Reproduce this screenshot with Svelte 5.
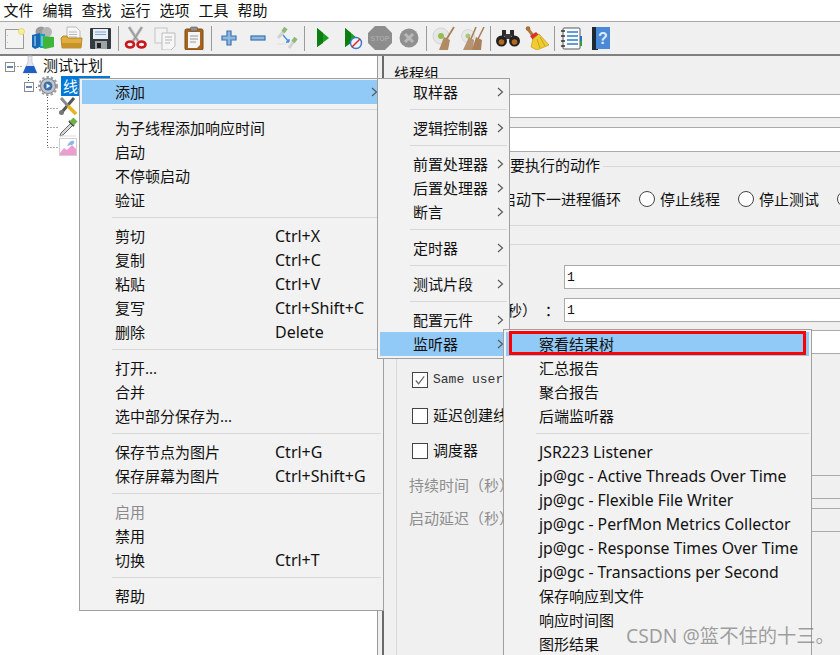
<script>
  const menus = ['文件','编辑','查找','运行','选项','工具','帮助'];
  const m1 = [
    {t:'添加',arrow:true,on:true},{sep:true},
    {t:'为子线程添加响应时间'},{t:'启动'},{t:'不停顿启动'},{t:'验证'},{sep:true},
    {t:'剪切',k:'Ctrl+X'},{t:'复制',k:'Ctrl+C'},{t:'粘贴',k:'Ctrl+V'},{t:'复写',k:'Ctrl+Shift+C'},{t:'删除',k:'Delete'},{sep:true},
    {t:'打开...'},{t:'合并'},{t:'选中部分保存为...'},{sep:true},
    {t:'保存节点为图片',k:'Ctrl+G'},{t:'保存屏幕为图片',k:'Ctrl+Shift+G'},{sep:true},
    {t:'启用',off:true},{t:'禁用'},{t:'切换',k:'Ctrl+T'},{sep:true},{t:'帮助'}
  ];
  const m2 = [
    {t:'取样器',arrow:true},{sep:true},{t:'逻辑控制器',arrow:true},{sep:true},
    {t:'前置处理器',arrow:true},{t:'后置处理器',arrow:true},{t:'断言',arrow:true},{sep:true},
    {t:'定时器',arrow:true},{sep:true},{t:'测试片段',arrow:true},{sep:true},
    {t:'配置元件',arrow:true},{t:'监听器',arrow:true,on:true}
  ];
  const m3 = [
    {t:'察看结果树',on:true},{t:'汇总报告'},{t:'聚合报告'},{t:'后端监听器'},{sep:true},
    {t:'JSR223 Listener'},{t:'jp@gc - Active Threads Over Time'},{t:'jp@gc - Flexible File Writer'},
    {t:'jp@gc - PerfMon Metrics Collector'},{t:'jp@gc - Response Times Over Time'},{t:'jp@gc - Transactions per Second'},
    {t:'保存响应到文件'},{t:'响应时间图'},{t:'图形结果'}
  ];
  const isLatin = (s) => /^[\x00-\x7f]+$/.test(s);
</script>

{#snippet menuRows(items)}
  {#each items as it}
    {#if it.sep}
      <div class="sep"></div>
    {:else}
      <div class="item" class:on={it.on} class:off={it.off}>
        <span class="lbl" class:latin={isLatin(it.t)}>{it.t}</span>
        {#if it.k}<span class="key">{it.k}</span>{/if}
        {#if it.arrow}
          <svg class="chev" width="7" height="10" viewBox="0 0 7 10"><path d="M1 1l4.500 4L1 9" fill="none" stroke="#555" stroke-width="1.100"/></svg>
        {/if}
      </div>
    {/if}
  {/each}
{/snippet}

{#snippet btn(kind)}
  <div class="tb">
    <svg width="24" height="24" viewBox="0 0 24 24">
      {#if kind==='new'}
        <rect x="3.500" y="3.500" width="18" height="19" fill="#f3f3f1" stroke="#9a9a9a"/>
        <circle cx="19.500" cy="5.500" r="3" fill="#f6ef9a" stroke="#ead96a"/>
        <path d="M5.500 9v1M5.500 16v1" stroke="#bbb"/>
      {:else if kind==='tpl'}
        <circle cx="10" cy="6" r="5.500" fill="#9a9a9a"/><circle cx="16" cy="6" r="5" fill="#b5b5b5"/>
        <path d="M1 9l8-2v14l-5 2-3-2z" fill="#1668b5"/>
        <path d="M9 8h5v14H9z" fill="#15a0c8"/>
        <path d="M12 10l11 1v10l-9 2-2-1z" fill="#3fb53a"/>
        <path d="M4 10v10M11 10v10" stroke="#bfe3f5"/>
      {:else if kind==='open'}
        <path d="M7 1h9l4 4v9H7z" fill="#f7f7f7" stroke="#a9a9a9" stroke-width=".8"/>
        <path d="M9 6h8M9 8.500h8M9 11h8" stroke="#b9b9b9"/>
        <path d="M1 12l2-2h4l1 2h14l-1 10H2z" fill="#e0ae3e" stroke="#a87a1e" stroke-width=".8"/>
        <path d="M2 17h20l-1 5H2z" fill="#c8922a"/>
      {:else if kind==='save'}
        <rect x="1" y="2" width="21" height="21" rx="1" fill="#333b42"/>
        <rect x="4" y="3" width="15" height="10" fill="#e9eef5"/>
        <path d="M6 6h11M6 8.500h11" stroke="#7ea6d2"/>
        <rect x="6" y="15" width="12" height="8" fill="#9fa3a6"/><rect x="8" y="17" width="4" height="5" fill="#222"/>
      {:else if kind==='cut'}
        <path d="M5 1l9 14M18 1L9 15" stroke="#b5b5b5" stroke-width="3" fill="none"/>
        <path d="M5 1l9 14M18 1L9 15" stroke="#8a8a8a" stroke-width=".8" fill="none"/>
        <ellipse cx="6" cy="18.500" rx="4" ry="3" fill="none" stroke="#c8161a" stroke-width="2.600"/>
        <ellipse cx="17.500" cy="18.500" rx="4" ry="3" fill="none" stroke="#c8161a" stroke-width="2.600"/>
      {:else if kind==='copy'}
        <rect x="2" y="2" width="12" height="15" fill="#f3f3f3" stroke="#c4c4c4"/>
        <path d="M9 7h13v13l-4 4H9z" fill="#f6f6f6" stroke="#bcbcbc"/>
        <path d="M12 11h7M12 14h7M12 17h5" stroke="#b4b4b4"/>
      {:else if kind==='paste'}
        <rect x="3" y="3" width="18" height="21" rx="1.500" fill="#a8641e" stroke="#7d4a14"/>
        <path d="M6 6h12v13l-3 3H6z" fill="#f5f5f5"/>
        <rect x="8.500" y="1" width="7" height="4" rx="1" fill="#8f8f8f" stroke="#555" stroke-width=".6"/>
        <path d="M8 10h8M8 13h8M8 16h6" stroke="#999"/>
      {:else if kind==='plus'}
        <path d="M10 5h4v5h5v4h-5v5h-4v-5H5v-4h5z" fill="#8eb8e2" stroke="#3b73ad" stroke-width="1.200"/>
      {:else if kind==='minus'}
        <rect x="5" y="10" width="14" height="4" fill="#8eb8e2" stroke="#3b73ad" stroke-width="1.200"/>
      {:else if kind==='toggle'}
        <path d="M3 12l6-7" stroke="#d2d2d2" stroke-width="3"/><path d="M8 6l3-4" stroke="#8fb87a" stroke-width="4"/>
        <path d="M14 22l5-7" stroke="#d2d2d2" stroke-width="3"/><path d="M18 16l3-4" stroke="#8fb87a" stroke-width="4"/>
        <path d="M8 9l6 7M14 16v-3M14 16h-3" stroke="#3b8fe0" stroke-width="1.300" fill="none"/>
        <path d="M2 18h10" stroke="#ddd"/>
      {:else if kind==='play'}
        <path d="M7 2l12 10L7 21z" fill="#16a21a"/><path d="M7 2l6 5v10l-6 4z" fill="#0d7f12"/>
      {:else if kind==='playno'}
        <path d="M6 2l12 10L6 21z" fill="#16a21a"/><path d="M6 2l6 5v10l-6 4z" fill="#0d7f12"/>
        <circle cx="17" cy="17" r="5.500" fill="#eef3fa" stroke="#3a78c8" stroke-width="1.400"/>
        <path d="M13 21l8-8" stroke="#e02020" stroke-width="1.500"/>
      {:else if kind==='stop'}
        <path d="M7 0h10l7 7v10l-7 7H7l-7-7V7z" fill="#8d8d8d"/>
        <text x="12" y="15" text-anchor="middle" class="stoptxt">STOP</text>
      {:else if kind==='halt'}
        <circle cx="12" cy="12" r="9.500" fill="#909090"/>
        <path d="M8 8l8 8M16 8l-8 8" stroke="#b9b9b9" stroke-width="3"/>
      {:else if kind==='clear'}
        <circle cx="9" cy="10" r="8" fill="#e6e6e6" stroke="#d4d4d4"/>
        <circle cx="9" cy="10" r="3" fill="#8fc04a"/>
        <path d="M22 1L14 14" stroke="#a9805a" stroke-width="1.800"/>
        <path d="M12 11l6 3-2 10H7z" fill="#b08a62"/>
      {:else if kind==='clearall'}
        <circle cx="7" cy="10" r="6.500" fill="#e8e8e8" stroke="#d6d6d6"/>
        <circle cx="7" cy="10" r="2.500" fill="#a8c878"/>
        <path d="M15 1L10 13M23 1L17 13" stroke="#a9805a" stroke-width="1.600"/>
        <path d="M8 11l5 3-1 10H2z" fill="#b69472"/><path d="M15 11l6 3-1 10h-9z" fill="#a9825c"/>
      {:else if kind==='find'}
        <path d="M6 4h4v6H6zM14 4h4v6h-4z" fill="#2b2b2b"/>
        <rect x="9" y="8" width="6" height="5" fill="#3a3a3a"/>
        <circle cx="5.500" cy="15" r="5.500" fill="#222"/><circle cx="18.500" cy="15" r="5.500" fill="#222"/>
        <circle cx="5.500" cy="16" r="2.800" fill="#b4691e"/><circle cx="18.500" cy="16" r="2.800" fill="#b4691e"/>
      {:else if kind==='broom'}
        <path d="M3 3l6 8" stroke="#b07a38" stroke-width="3"/>
        <circle cx="3" cy="2.500" r="2.300" fill="#a87034"/>
        <path d="M5 10l6-4 3 3-6 5z" fill="#d8322a"/>
        <path d="M8 13l6-5 10 11-12 5-2-1-4-2z" fill="#f0cc30" stroke="#c09a18" stroke-width=".7"/>
        <path d="M12 13l3 9M15 11l5 9" stroke="#c9a21e"/>
      {:else if kind==='list'}
        <rect x="3" y="2" width="17" height="21" rx="1" fill="#fafafa" stroke="#5b5b5b"/>
        <path d="M7 6h11M7 10h11M7 14h11M7 18h11" stroke="#2d7fd0" stroke-width="1.300"/>
        <path d="M1 5h4M1 10h4M1 15h4M1 20h4" stroke="#333" stroke-width="1.300"/>
        <rect x="20" y="10" width="2" height="5" fill="#2d6fc8"/><rect x="20" y="15" width="2" height="5" fill="#2fa33a"/>
      {:else if kind==='help'}
        <rect x="3" y="1" width="6" height="23" fill="#1b2a33"/>
        <rect x="7" y="1" width="14" height="22" fill="#4a88d8"/>
        <text x="14" y="18" text-anchor="middle" class="qmark">?</text>
      {/if}
    </svg>
  </div>
{/snippet}

<div class="win">
  <div class="menubar">
    {#each menus as m}<span class="mi">{m}</span>{/each}
  </div>

  <div class="toolbar">
    {@render btn('new')}{@render btn('tpl')}{@render btn('open')}{@render btn('save')}
    <div class="vs"></div>
    {@render btn('cut')}{@render btn('copy')}{@render btn('paste')}
    <div class="vs"></div>
    {@render btn('plus')}{@render btn('minus')}{@render btn('toggle')}
    <div class="vs"></div>
    {@render btn('play')}{@render btn('playno')}{@render btn('stop')}{@render btn('halt')}
    <div class="vs"></div>
    {@render btn('clear')}{@render btn('clearall')}
    <div class="vs"></div>
    {@render btn('find')}{@render btn('broom')}
    <div class="vs"></div>
    {@render btn('list')}{@render btn('help')}
  </div>

  <div class="main">
    <div class="tree">
      <svg class="lines" width="80" height="110" viewBox="0 0 80 110">
        <g stroke="#555" stroke-dasharray="1 2" fill="none">
          <path d="M14.500 10.500H22M28.500 15v12M33 31.500h6M47.500 41v50M47.500 52.500H58M47.500 71.500H58M47.500 91.500H58"/>
        </g>
        <g fill="#fff" stroke="#8c8c8c">
          <rect x="5.500" y="6.500" width="9" height="9"/><rect x="24.500" y="26.500" width="9" height="9"/>
        </g>
        <path d="M7 11h6M26 31h6" stroke="#2d5f9e" stroke-width="1.300"/>
      </svg>
      <div class="row r1">
        <svg class="ti" width="20" height="20" viewBox="0 0 20 20">
          <path d="M8 1h4v6l5 11H3L8 7z" fill="#e3e6ec" stroke="#b9bdc6" stroke-width=".7"/>
          <path d="M6 11h8l3 7H3z" fill="#1d5fc4"/>
        </svg>
        <span class="tl">测试计划</span>
      </div>
      <div class="row r2">
        <svg class="ti" width="20" height="20" viewBox="0 0 20 20">
          <circle cx="10" cy="10" r="7.500" fill="#c4c7cc" stroke="#84888e" stroke-width="1.200"/>
          <circle cx="10" cy="10" r="9" fill="none" stroke="#9a9da2" stroke-width="2" stroke-dasharray="2.500 2"/>
          <circle cx="10" cy="10" r="4.500" fill="#3a6ea8"/>
          <path d="M8.500 7.500l4 2.500-4 2.500z" fill="#eaf2fb"/>
        </svg>
        <span class="tl sel">线程组</span>
      </div>
      <div class="row r3">
        <svg class="ti" width="20" height="20" viewBox="0 0 20 20">
          <path d="M16 2L4 16" stroke="#555" stroke-width="3"/>
          <circle cx="3.500" cy="16.500" r="2.500" fill="#777"/>
          <path d="M3 2l7 8" stroke="#8a8a8a" stroke-width="3"/>
          <path d="M10 10l8 8" stroke="#e6b41e" stroke-width="3.600"/>
        </svg>
      </div>
      <div class="row r3">
        <svg class="ti" width="20" height="20" viewBox="0 0 20 20">
          <path d="M13 6L3 16l-1 3 3-1L15 8z" fill="#d8d8d8" stroke="#555" stroke-width=".9"/>
          <path d="M11 4l5 5" stroke="#333" stroke-width="2"/>
          <path d="M13.500 6.500l4-4" stroke="#6db04a" stroke-width="6"/>
          <path d="M2 19h16" stroke="#ddd"/>
        </svg>
      </div>
      <div class="row r3">
        <svg class="ti" width="20" height="20" viewBox="0 0 20 20">
          <rect x="1.500" y="1.500" width="17" height="17" fill="#fff" stroke="#d0d0d0"/>
          <path d="M2 16l4-5 3 2 5-5 4 4v6H2z" fill="#ee9bcf"/>
          <path d="M9 9c2-5 5-6 7-5 1 2-1 4-3 4z" fill="#8cb8ea"/>
        </svg>
      </div>
    </div>

    <div class="gutter"></div>

    <div class="panel">
      <div class="ptitle">线程组</div>
      <div class="frow"><span class="flabel">名称：</span><div class="fld f1"></div></div>
      <div class="frow second"><span class="flabel">注释：</span><div class="fld f2"></div></div>

      <div class="group g1">
        <span class="legend">在取样器错误后要执行的动作</span>
        <div class="radios">
          <span class="rd"></span><span class="rt">继续</span>
          <span class="rd"></span><span class="rt">启动下一进程循环</span>
          <span class="rd"></span><span class="rt">停止线程</span>
          <span class="rd"></span><span class="rt">停止测试</span>
          <span class="rd"></span><span class="rt">立即停止测试</span>
        </div>
      </div>

      <div class="group g2">
        <div class="grow"><span class="glabel">线程数：</span><div class="inp">1</div></div>
        <div class="grow g9"><span class="glabel ramp">Ramp-Up时间（秒）&nbsp;&nbsp;：</span><div class="inp">1</div></div>
        <div class="grow g8"><span class="glabel">循环次数</span><div class="inp"></div></div>
        <div class="chk c1"><span class="box"><svg width="15" height="15" viewBox="0 0 15 15"><path d="M3 7.500l3 3.500 6-8" fill="none" stroke="#666" stroke-width="1.300"/></svg></span><span class="mono">Same user on each iteration</span></div>
        <div class="chk c2"><span class="box"></span><span class="ct">延迟创建线程直到需要</span></div>
        <div class="chk c3"><span class="box"></span><span class="ct">调度器</span></div>
        <div class="grow g12"><span class="glabel dim">持续时间（秒）</span><div class="inp dis"></div></div>
        <div class="grow g9"><span class="glabel dim">启动延迟（秒）</span><div class="inp dis"></div></div>
      </div>
    </div>
  </div>

  <div class="popup p1">{@render menuRows(m1)}</div>
  <div class="popup p2">{@render menuRows(m2)}</div>
  <div class="popup p3">
    {@render menuRows(m3)}
    <div class="redbox"></div>
  </div>
  <div class="mark">CSDN @篮不住的十三。</div>
</div>

<style>
  :global(body){margin:0;background:#f0f0f0;}
  .win{position:relative;width:840px;height:655px;overflow:hidden;display:flex;flex-direction:column;
    font-family:"Noto Sans","Noto Sans CJK SC",sans-serif;font-size:15px;color:#111;background:#f0f0f0;}
  .menubar{height:21px;background:#fff;display:flex;align-items:center;margin-left:-1px;border-bottom:1px solid #a8a8a8;flex:none;}
  .mi{padding:0 4.500px;line-height:21px;}
  .toolbar{height:32px;flex:none;display:flex;align-items:center;background:#f0f0f0;border-bottom:2px solid #808080;margin-left:-1px;}
  .tb{width:29px;height:24px;display:flex;justify-content:center;flex:none;}
  .vs{width:6px;height:25px;flex:none;position:relative;background:linear-gradient(#9b9b9b,#9b9b9b) center/1px 100% no-repeat;}
  .stoptxt{font:700 7px "Liberation Sans",sans-serif;fill:#a9a9a9;}
  .qmark{font:700 16px "Liberation Sans",sans-serif;fill:#dfeaf8;}
  .main{flex:1;display:flex;min-height:0;}
  .tree{position:relative;width:377px;background:#fff;border-right:1px solid #999;flex:none;}
  .lines{position:absolute;left:0;top:0;}
  .row{height:20.500px;display:flex;align-items:center;}
  .r1{padding-left:20px;margin-top:-1px;}
  .r2{padding-left:38px;}
  .r3{padding-left:58px;}
  .ti{flex:none;}
  .tl{padding:0 3px;line-height:20px;}
  .sel{background:#0078d7;color:#fff;margin-left:3px;padding:0 2px;width:45px;}
  .gutter{width:4px;flex:none;border-right:2px solid #6a6a6a;box-sizing:content-box;}
  .panel{flex:1;min-width:0;overflow:hidden;padding-left:10px;background:#f0f0f0;}
  .ptitle{line-height:24px;margin-top:5px;}
  .frow{display:flex;align-items:center;margin-top:9px;height:24px;}
  .frow.second{height:25px;}
  .flabel{width:46px;flex:none;}
  .fld{flex:1;height:100%;box-sizing:border-box;background:#fff;border:1px solid #aaa;border-right:0;}
  .group{position:relative;margin-left:2px;border:1px solid #d9d9d9;border-right:0;}
  .g1{margin-top:14px;padding-top:20px;padding-bottom:14px;}
  .legend{position:absolute;left:5px;top:-14px;background:#f0f0f0;padding:0 3px;line-height:24px;}
  .radios{display:flex;align-items:center;padding-left:14px;height:24px;white-space:nowrap;}
  .rd{width:16px;height:16px;box-sizing:border-box;border:1px solid #444;border-radius:50%;background:#fff;flex:none;margin-right:5px;}
  .rt{margin-right:18px;flex:none;padding-bottom:1px;}
  .g2{margin-top:18px;padding-top:20px;padding-left:12px;height:400px;border-bottom:0;}
  .grow{display:flex;align-items:center;height:24px;white-space:nowrap;}
  .g8{margin-top:8px;}
  .g12{margin-top:12px;}
  .g9{margin-top:9px;}
  .glabel{width:155px;flex:none;overflow:hidden;padding-bottom:2px;}
  .ramp{text-indent:-13px;}
  .dim{color:#8e8e8e;padding-bottom:6px;}
  .inp{flex:1;height:24px;box-sizing:border-box;background:#fff;border:1px solid #aaa;border-right:0;padding-left:2px;line-height:24px;font-family:"Liberation Mono",monospace;font-size:13px;}
  .inp.dis{background:#f0f0f0;}
  .chk{display:flex;align-items:center;height:24px;white-space:nowrap;padding-left:3px;}
  .c1{margin-top:14px;}.c2{margin-top:12px;}.c3{margin-top:11px;}
  .box{width:16px;height:16px;box-sizing:border-box;border:1px solid #444;background:#fff;margin-right:5px;flex:none;display:flex;}
  .ct{padding-bottom:4px;}
  .mono{font-family:"Liberation Mono",monospace;font-size:13px;color:#333;padding-bottom:2px;}

  .popup{position:absolute;box-sizing:border-box;background:#f2f2f2;border:1px solid #a0a0a0;padding:1px 2px;z-index:2;}
  .p1{left:79px;top:78px;width:305px;height:533px;}
  .p2{left:377px;top:78px;width:133px;height:281px;z-index:3;}
  .p3{left:503px;top:329px;width:309px;height:340px;padding-top:2px;z-index:4;}
  .item{position:relative;height:24px;box-sizing:border-box;display:flex;align-items:center;padding:0 0 2px 33px;white-space:nowrap;}
  .item.on{background:#91c9f7;}
  .item.off{color:#8a8a8a;}
  .latin{font-size:15.800px;padding-top:2px;}
  .key{position:absolute;left:193px;top:1px;line-height:22px;font-size:16px;}
  .chev{position:absolute;right:3px;top:7px;}
  .sep{height:1px;background:#d8d8d8;margin:5px 0 6px 30px;}
  .redbox{position:absolute;left:5px;top:1px;width:297px;height:24px;box-sizing:border-box;border:3px solid #f00;}
  .mark{position:absolute;left:626px;top:624px;font-size:19.300px;line-height:24px;color:rgba(120,120,120,.7);z-index:5;white-space:nowrap;}
</style>
